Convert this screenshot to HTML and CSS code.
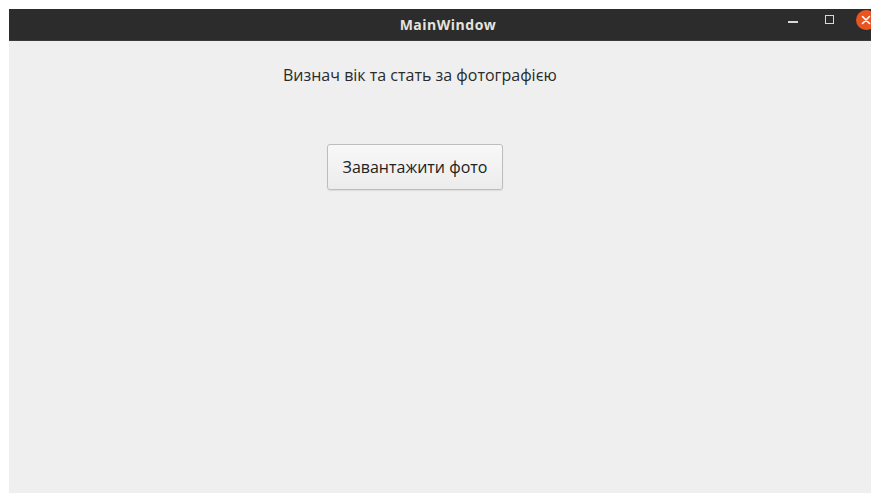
FILE: index.html
```html
<!DOCTYPE html>
<html lang="uk">
<head>
<meta charset="utf-8">
<title>MainWindow</title>
<link rel="stylesheet" href="styles.css">
</head>
<body>
<div class="window">
  <header class="titlebar">
    <div class="title">MainWindow</div>
    <div class="controls">
      <span class="ctl ctl-min"></span>
      <span class="ctl ctl-max"></span>
      <span class="ctl ctl-close">
        <svg width="20" height="20" viewBox="0 0 20 20"><path d="M6.5 6.5 L13.5 13.5 M13.5 6.5 L6.5 13.5" stroke="#fff" stroke-width="1.6" stroke-linecap="round"/></svg>
      </span>
    </div>
  </header>
  <main class="content">
    <p class="caption">Визнач вік та стать за фотографією</p>
    <button class="upload" type="button">Завантажити фото</button>
  </main>
</div>
</body>
</html>
```

FILE: styles.css
```css
html, body {
  margin: 0;
  height: 100%;
  overflow: hidden;
  background: #ffffff;
}

body {
  font-family: "Open Sans", "Noto Sans", sans-serif;
}

.window {
  margin: 9px 0 0 9px;
  width: 878px;
  height: 484px;
  display: flex;
  flex-direction: column;
  background: #efefef;
}

.titlebar {
  height: 31px;
  flex: none;
  background: #2c2c2c;
  border-bottom: 1px solid #3a3a3a;
  display: grid;
  grid-template-columns: 1fr auto 1fr;
  align-items: center;
}

.title {
  grid-column: 2;
  color: #e6e3de;
  font-weight: 700;
  font-size: 14px;
  letter-spacing: 0.5px;
}

.controls {
  grid-column: 3;
  justify-self: end;
  align-self: start;
  display: flex;
  align-items: flex-start;
  padding-right: 11px;
  margin-top: 1px;
}

.ctl {
  display: block;
  flex: none;
}

.ctl-min {
  width: 10px;
  height: 2px;
  background: #d8d8d8;
  margin-top: 11px;
}

.ctl-max {
  width: 7px;
  height: 7px;
  border: 1px solid #d8d8d8;
  margin: 5px 0 0 27px;
}

.ctl-close {
  width: 20px;
  height: 20px;
  border-radius: 50%;
  background: #e95420;
  margin-left: 22px;
}

.ctl-close svg {
  display: block;
}

.content {
  flex: 1;
  display: flex;
  flex-direction: column;
  align-items: flex-start;
}

.caption {
  margin: 24px 0 0 274px;
  font-size: 16px;
  color: #2a2a2a;
  line-height: 20px;
}

.upload {
  margin: 59px 0 0 318px;
  width: 176px;
  height: 46px;
  font-family: inherit;
  font-size: 16px;
  color: #222;
  background: linear-gradient(#f8f8f8, #ececec);
  border: 1px solid #bdbdbd;
  border-radius: 3px;
  box-shadow: 0 1px 1px rgba(0, 0, 0, 0.08);
  padding: 0;
}
```
